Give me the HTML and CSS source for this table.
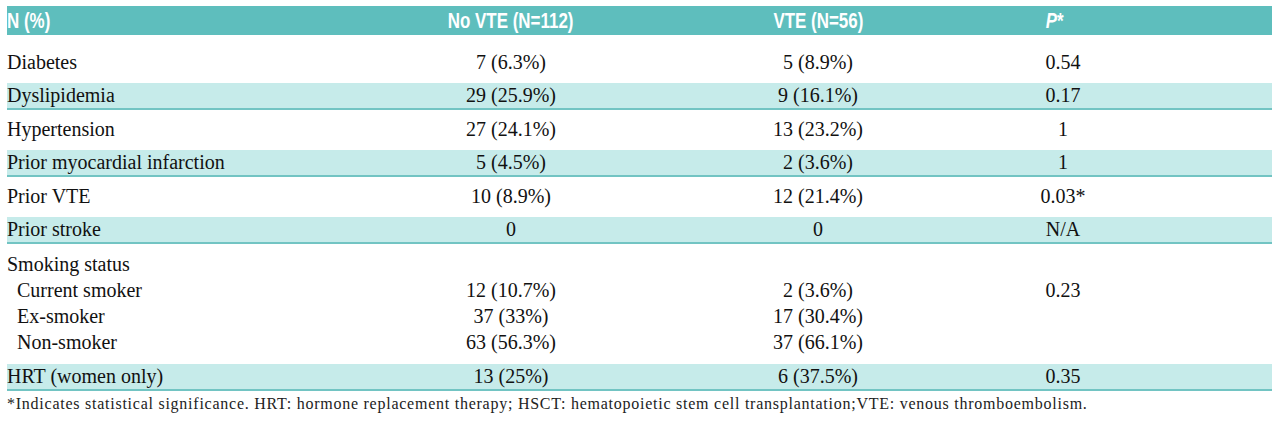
FILE: index.html
```html
<!DOCTYPE html>
<html>
<head>
<meta charset="utf-8">
<link rel="stylesheet" href="styles.css">
</head>
<body>
<div class="table">
  <div class="row head">
    <div class="c1"><span class="hl">N (%)</span></div>
    <div class="c"><span class="hc">No VTE (N=112)</span></div>
    <div class="c"><span class="hc">VTE (N=56)</span></div>
    <div class="c"><span class="hc hp"><i>P</i>*</span></div>
    <div></div>
  </div>
  <div class="body">
    <div class="row">
      <div class="c1">Diabetes</div><div class="c">7 (6.3%)</div><div class="c">5 (8.9%)</div><div class="c">0.54</div><div></div>
    </div>
    <div class="row alt">
      <div class="c1">Dyslipidemia</div><div class="c">29 (25.9%)</div><div class="c">9 (16.1%)</div><div class="c">0.17</div><div></div>
    </div>
    <div class="row">
      <div class="c1">Hypertension</div><div class="c">27 (24.1%)</div><div class="c">13 (23.2%)</div><div class="c">1</div><div></div>
    </div>
    <div class="row alt">
      <div class="c1">Prior myocardial infarction</div><div class="c">5 (4.5%)</div><div class="c">2 (3.6%)</div><div class="c">1</div><div></div>
    </div>
    <div class="row">
      <div class="c1">Prior VTE</div><div class="c">10 (8.9%)</div><div class="c">12 (21.4%)</div><div class="c">0.03*</div><div></div>
    </div>
    <div class="row alt">
      <div class="c1">Prior stroke</div><div class="c">0</div><div class="c">0</div><div class="c">N/A</div><div></div>
    </div>
  </div>
  <div class="row multi">
    <div class="c1">
      <div>Smoking status</div>
      <div class="ind">Current smoker</div>
      <div class="ind">Ex-smoker</div>
      <div class="ind">Non-smoker</div>
    </div>
    <div class="c">
      <div>&nbsp;</div>
      <div>12 (10.7%)</div>
      <div>37 (33%)</div>
      <div>63 (56.3%)</div>
    </div>
    <div class="c">
      <div>&nbsp;</div>
      <div>2 (3.6%)</div>
      <div>17 (30.4%)</div>
      <div>37 (66.1%)</div>
    </div>
    <div class="c">
      <div>&nbsp;</div>
      <div>0.23</div>
    </div>
    <div></div>
  </div>
  <div class="row alt">
    <div class="c1">HRT (women only)</div><div class="c">13 (25%)</div><div class="c">6 (37.5%)</div><div class="c">0.35</div><div></div>
  </div>
  <p class="note">*Indicates statistical significance. HRT: hormone replacement therapy; HSCT: hematopoietic stem cell transplantation;VTE: venous thromboembolism.</p>
</div>
</body>
</html>
```
FILE: styles.css
```css
html, body {
  margin: 0;
  padding: 0;
  background: #ffffff;
}
body {
  font-family: "Liberation Serif", "Times New Roman", serif;
  font-size: 20px;
  color: #111111;
}
.table {
  width: 1265px;
  margin-left: 7px;
  padding-top: 6px;
}
.row {
  display: grid;
  grid-template-columns: 300px 408px 206px 284px 1fr;
  height: 25px;
  line-height: 25px;
  border-bottom: 2px solid transparent;
  white-space: nowrap;
}
.c {
  text-align: center;
}
.head {
  height: 29px;
  line-height: 29px;
  border-bottom: 0;
  background: #5ebebd;
  color: #ffffff;
  font-family: "Liberation Sans", Arial, sans-serif;
  font-weight: bold;
  font-size: 22px;
}
.hl, .hc {
  display: inline-block;
  transform: scaleX(0.77);
}
.hl {
  transform-origin: left center;
}
.hc {
  transform-origin: center center;
}
.hp {
  margin-right: 16px;
}
.body {
  display: flex;
  flex-direction: column;
  gap: 6.5px;
  margin-top: 14.5px;
}
.alt {
  background: #c6ebea;
  border-bottom-color: #72c4c3;
}
.multi {
  height: auto;
  line-height: 26px;
  padding: 7px 0 9px;
  border-bottom: 0;
}
.ind {
  padding-left: 10px;
}
.note {
  margin: 0;
  padding-top: 3px;
  font-size: 16px;
  line-height: 20px;
  letter-spacing: 0.75px;
  color: #222222;
}
```
